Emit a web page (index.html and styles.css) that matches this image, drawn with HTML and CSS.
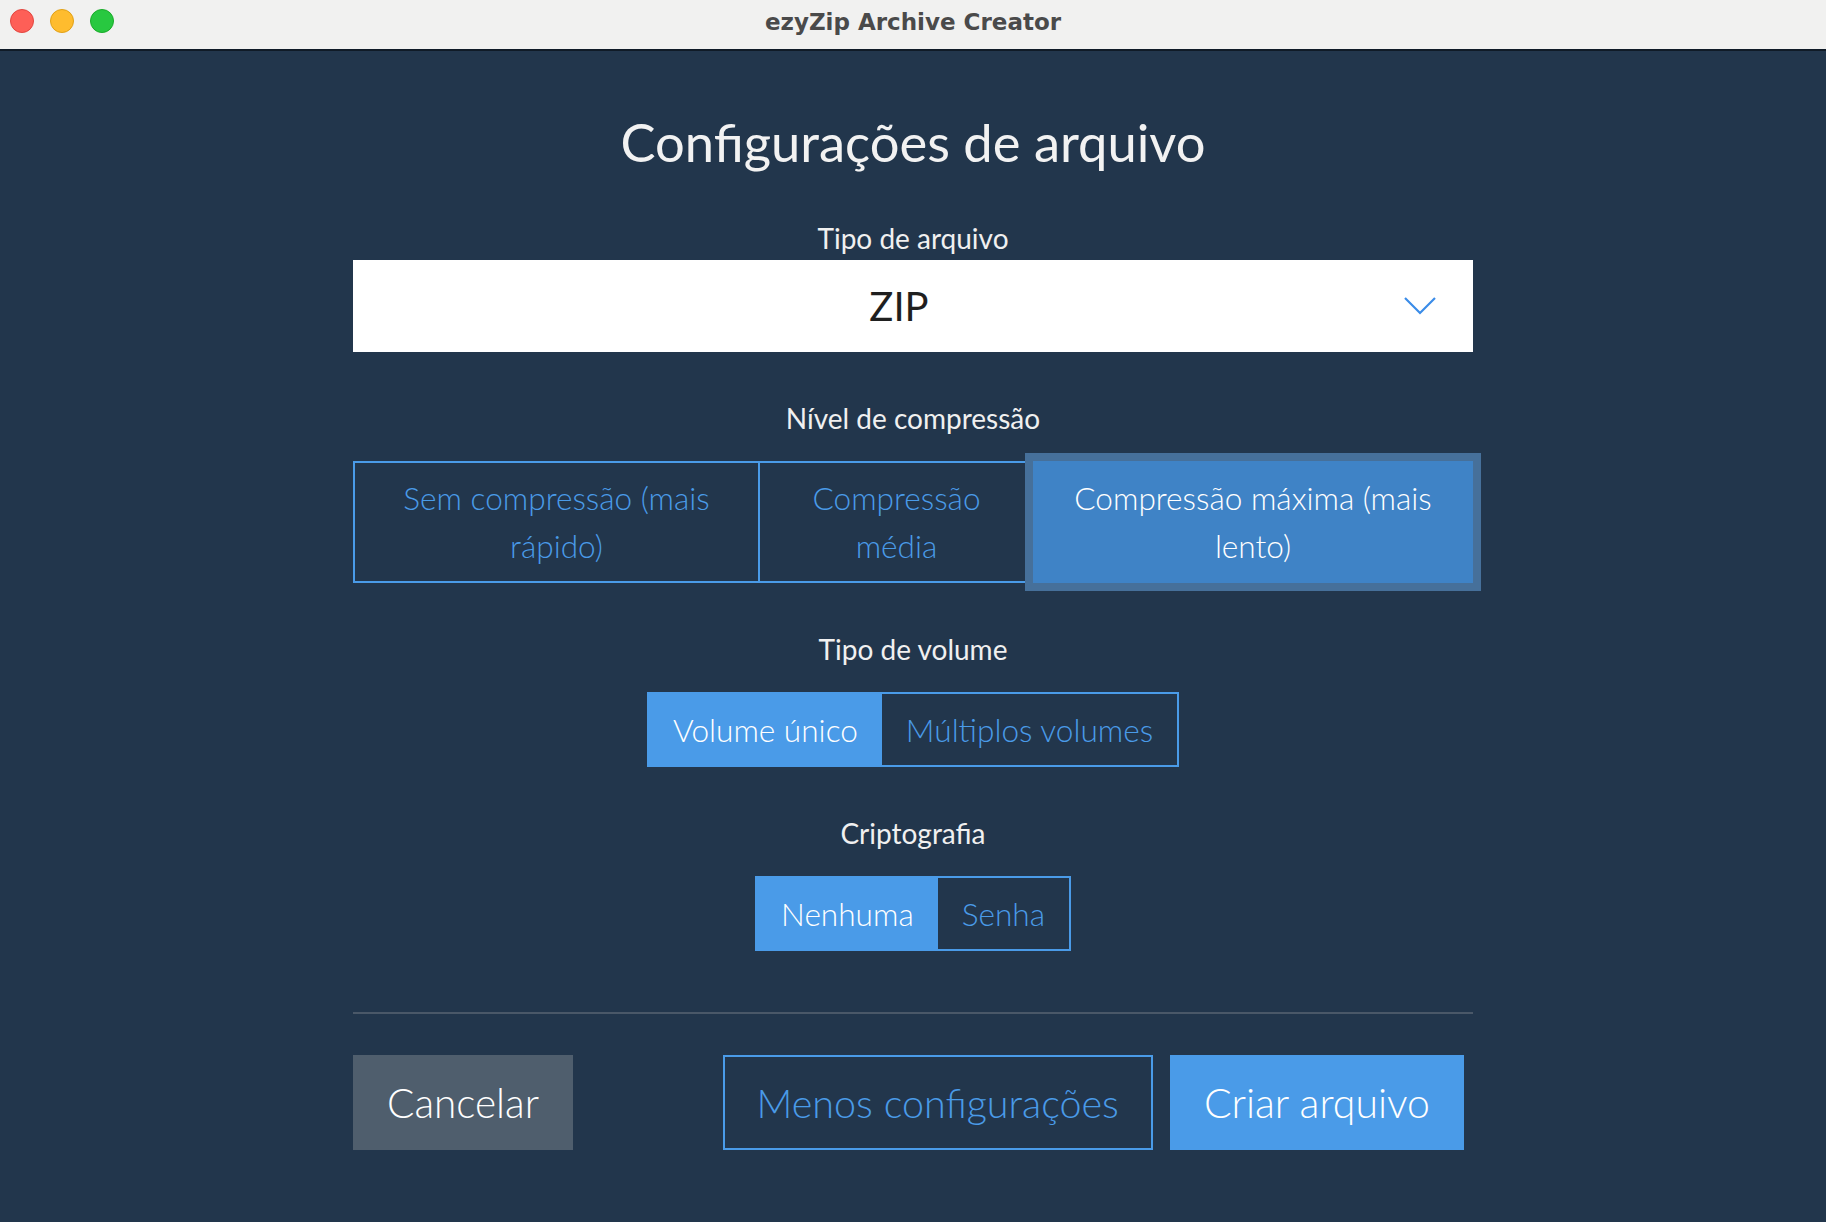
FILE: index.html
```html
<!DOCTYPE html>
<html lang="pt">
<head>
<meta charset="utf-8">
<title>ezyZip Archive Creator</title>
<link rel="stylesheet" href="styles.css">
</head>
<body>
<div class="window">
  <header class="titlebar">
    <div class="lights">
      <span class="light red"></span>
      <span class="light yellow"></span>
      <span class="light green"></span>
    </div>
    <div class="title">ezyZip Archive Creator</div>
  </header>
  <main class="content">
    <h1 class="heading">Configurações de arquivo</h1>

    <div class="label label-first">Tipo de arquivo</div>
    <div class="select">
      <span class="select-value">ZIP</span>
      <svg class="chevron" width="34" height="20" viewBox="0 0 34 20" aria-hidden="true">
        <path d="M2 2 L17 17 L32 2" fill="none" stroke="#3b8ce8" stroke-width="2.2"/>
      </svg>
    </div>

    <div class="label">Nível de compressão</div>
    <div class="seg seg-compress">
      <div class="seg-item">Sem compressão (mais rápido)</div>
      <div class="seg-item seg-sep">Compressão média</div>
      <div class="seg-item seg-focus">Compressão máxima (mais lento)</div>
    </div>

    <div class="label">Tipo de volume</div>
    <div class="seg seg-inline">
      <div class="seg-item seg-on">Volume único</div>
      <div class="seg-item">Múltiplos volumes</div>
    </div>

    <div class="label">Criptografia</div>
    <div class="seg seg-inline">
      <div class="seg-item seg-on">Nenhuma</div>
      <div class="seg-item">Senha</div>
    </div>

    <hr class="divider">

    <div class="actions">
      <button class="btn btn-cancel">Cancelar</button>
      <div class="actions-right">
        <button class="btn btn-outline">Menos configurações</button>
        <button class="btn btn-primary">Criar arquivo</button>
      </div>
    </div>
  </main>
</div>
</body>
</html>
```
FILE: styles.css
```css
html, body {
  margin: 0;
  padding: 0;
  height: 100%;
}
body {
  background: #22364c;
  font-family: Lato, "Open Sans", "Liberation Sans", sans-serif;
  overflow: hidden;
}
.window {
  min-height: 100%;
  background: #22364c;
}
.titlebar {
  position: relative;
  height: 49px;
  background: #f1f1f0;
  border-bottom: 2px solid #101b27;
  display: flex;
  align-items: center;
  justify-content: center;
}
.lights {
  position: absolute;
  left: 10px;
  top: 9px;
  display: flex;
  gap: 16px;
}
.light {
  width: 24px;
  height: 24px;
  border-radius: 50%;
  box-sizing: border-box;
}
.red { background: #fe5f57; border: 1px solid #e2463f; }
.yellow { background: #febc2e; border: 1px solid #e1a116; }
.green { background: #28c840; border: 1px solid #1aab29; }
.title {
  font-family: "DejaVu Sans", "Liberation Sans", sans-serif;
  font-weight: bold;
  font-size: 23px;
  color: #4a4a4a;
  margin-top: -6px;
}
.content {
  width: 1120px;
  margin: 0 auto;
  padding-top: 60px;
  display: flex;
  flex-direction: column;
  align-items: center;
}
.heading {
  margin: 0;
  font-weight: 400;
  font-size: 52.5px;
  line-height: 62px;
  color: #f2f2f2;
  letter-spacing: 0;
}
.label {
  margin-top: 50px;
  margin-bottom: 27px;
  font-size: 28px;
  line-height: 32px;
  color: #f0f0f0;
  font-weight: 400;
}
.label-first {
  margin-top: 49px;
  margin-bottom: 6px;
}
.select {
  position: relative;
  width: 100%;
  height: 92px;
  background: #ffffff;
  box-sizing: border-box;
  padding-right: 28px;
  display: flex;
  align-items: center;
  justify-content: center;
}
.select-value {
  font-size: 40px;
  color: #1f1f1f;
  font-weight: 400;
}
.chevron {
  position: absolute;
  right: 36px;
  top: 36px;
}
.seg {
  display: flex;
  border: 2px solid #4a9be8;
  box-sizing: border-box;
}
.seg-item {
  box-sizing: border-box;
  display: flex;
  align-items: center;
  justify-content: center;
  text-align: center;
  color: #4a9be8;
  font-weight: 300;
  font-size: 31.6px;
  line-height: 48px;
}
.seg-compress {
  width: 100%;
  height: 122px;
}
.seg-compress .seg-item {
  padding: 0 38px;
}
.seg-compress .seg-item:nth-child(1) { width: 403px; }
.seg-compress .seg-item:nth-child(2) { width: 275px; }
.seg-compress .seg-item:nth-child(3) { flex: 1; }
.seg-sep {
  border-left: 2px solid #4a9be8;
}
.seg-focus {
  position: relative;
  background: #3f83c6;
  color: #ffffff;
  margin: -2px -2px -2px 0;
  outline: 8px solid #46709a;
}
.seg-inline {
  height: 75px;
}
.seg-inline .seg-item {
  padding: 0 24px;
}
.seg-on {
  background: #4a9be8;
  color: #ffffff;
  margin: -2px 0 -2px -2px;
  padding-left: 26px !important;
}
.divider {
  width: 100%;
  margin: 61px 0 0;
  border: 0;
  height: 2px;
  background: #4a5868;
}
.actions {
  width: 100%;
  margin-top: 41px;
  display: flex;
  justify-content: space-between;
  box-sizing: border-box;
  padding-right: 9px;
}
.actions-right {
  display: flex;
  gap: 17px;
}
.btn {
  height: 95px;
  padding: 0 34px;
  font-family: Lato, "Open Sans", "Liberation Sans", sans-serif;
  font-weight: 300;
  font-size: 40.5px;
  border: 0;
  box-sizing: border-box;
  cursor: pointer;
}
.btn-cancel {
  background: #4f5e6d;
  color: #ffffff;
}
.btn-outline {
  background: transparent;
  color: #4a9be8;
  border: 2px solid #4a9be8;
  padding: 0 32px;
  font-size: 39.5px;
}
.btn-primary {
  background: #4a9be8;
  color: #ffffff;
  font-size: 41px;
}
```
